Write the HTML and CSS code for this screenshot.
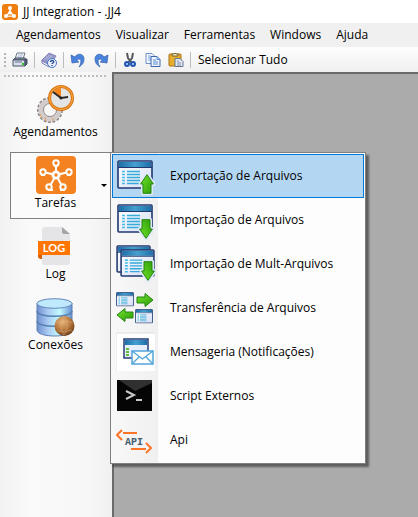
FILE: index.html
```html
<!DOCTYPE html>
<html lang="pt-BR">
<head>
<meta charset="utf-8">
<meta name="viewport" content="width=device-width, initial-scale=1">
<title>JJ Integration - .JJ4</title>
<link rel="stylesheet" href="styles.css">
</head>
<body>
<svg class="defs" aria-hidden="true">
  <defs>
    <linearGradient id="green" x1="0" y1="0" x2="1" y2="1"><stop offset="0" stop-color="#72e329"/><stop offset="1" stop-color="#2a9c08"/></linearGradient>
    <linearGradient id="bar" x1="0" y1="0" x2="1" y2="0"><stop offset="0" stop-color="#1f6fa8"/><stop offset=".5" stop-color="#43a0cf"/><stop offset="1" stop-color="#1f6fa8"/></linearGradient>
    <linearGradient id="pane" x1="0" y1="0" x2="1" y2="1"><stop offset="0" stop-color="#fff"/><stop offset="1" stop-color="#d5def5"/></linearGradient>
    <linearGradient id="disk" x1="0" y1="0" x2="1" y2="0"><stop offset="0" stop-color="#6d8fd0"/><stop offset=".3" stop-color="#a9c8f2"/><stop offset=".65" stop-color="#c2fbff"/><stop offset="1" stop-color="#6590d2"/></linearGradient>
    <radialGradient id="globe" cx=".4" cy=".3" r=".7"><stop offset="0" stop-color="#e6b57a"/><stop offset=".55" stop-color="#bb7c40"/><stop offset="1" stop-color="#70421c"/></radialGradient>
    <symbol id="window" viewBox="0 0 36 29">
      <rect x="1" y="1" width="34" height="27" rx="1" fill="url(#pane)" stroke="#20386f" stroke-width="1.6"/>
      <rect x="2" y="2" width="32" height="5" fill="url(#bar)"/>
      <path d="M1 7.5h34" stroke="#20386f"/>
      <path d="M5 11.500h3M5 14.500h3M5 17.500h3M5 20.500h3M5 23.500h3" stroke="#48bce8" stroke-width="1.600"/>
      <path d="M10 11.500h13M10 14.500h13M10 17.500h13M10 20.500h13M10 23.500h13" stroke="#35abd9" stroke-width="1.400"/>
    </symbol>
    <symbol id="arrow" viewBox="0 0 14 20" overflow="visible">
      <path d="M7 .7l6.400 9.300H11v9.300H3V10H.6z" fill="#dfe9f8" stroke="#dfe9f8" stroke-width="4" stroke-linejoin="round"/>
      <path d="M7 .7l6.400 9.300H11v9.300H3V10H.6z" fill="url(#green)" stroke="#258312" stroke-linejoin="round"/>
    </symbol>
  </defs>
</svg>

<header class="titlebar">
  <svg class="logo" viewBox="0 0 16 16" aria-hidden="true">
    <rect width="16" height="16" rx="3" fill="#f07d10"/>
    <path d="M8 4v5M8 8l-4 4M8 8l4 4M4 12h8" stroke="#fff" stroke-width="1.500"/>
    <circle cx="8" cy="4" r="2" fill="#fff"/><circle cx="4" cy="12" r="2" fill="#fff"/><circle cx="12" cy="12" r="2" fill="#fff"/><circle cx="8" cy="9" r="2" fill="#fff"/>
    <path d="M6 11h4" stroke="#f07d10"/>
  </svg>
  <h1>JJ Integration - .JJ4</h1>
</header>

<nav class="menubar">
  <button>Agendamentos</button>
  <button>Visualizar</button>
  <button>Ferramentas</button>
  <button>Windows</button>
  <button>Ajuda</button>
</nav>

<div class="toolbar" role="toolbar">
  <span class="grip"></span>
  <button aria-label="Imprimir"><svg viewBox="0 0 16 16">
    <path d="M5 1h8l-2 6H3z" fill="#fafcff" stroke="#6d7686"/><path d="M6 3h5M5 5h5" stroke="#9ab3d2"/>
    <path d="M3 6h10l2 2H1z" fill="#8d99ad" stroke="#4b5567"/><path d="M1 8h12v6H1z" fill="#d9dfea" stroke="#465166"/>
    <path d="M13 8l2-1v5l-2 2z" fill="#54627c" stroke="#3f4b62"/><path d="M3 10h7" stroke="#68758b"/><path d="M10 12h2" stroke="#2cc423" stroke-width="2"/>
  </svg></button>
  <span class="separator"></span>
  <button aria-label="Ajuda"><svg viewBox="0 0 16 16">
    <path d="M1 8l7-7 7 3-6 9z" fill="#9799c9" stroke="#8587bb"/><path d="M1 8v3l7 4 1-2-8-4z" fill="#eef0fc" stroke="#7d7fb5"/><path d="M4 7l5-4M6 8l5-4" stroke="#b9bbe2"/>
    <circle cx="11" cy="11" r="4.500" fill="#e9f0fc" stroke="#4574bc"/><path d="M9.500 10c0-2 3.500-2 3.200 0-.2 1-1.700 1-1.700 2M11 13v1" fill="none" stroke="#24488f" stroke-width="1.300"/>
  </svg></button>
  <span class="separator"></span>
  <button aria-label="Desfazer"><svg viewBox="0 0 16 16">
    <path d="M5 5c2-4 9-4 9 2 0 4-2 6-5 8 2-3 3-8 0-8-1 0-2 1-2 2l2 1-7 1-1-8z" fill="#4a83dc" stroke="#315fae" stroke-width=".7"/>
  </svg></button>
  <button aria-label="Refazer"><svg viewBox="0 0 16 16">
    <path d="M11 5C9 1 2 1 2 7c0 4 2 6 5 8-2-3-3-8 0-8 1 0 2 1 2 2l-2 1 7 1 1-8z" fill="#4a83dc" stroke="#315fae" stroke-width=".7"/>
  </svg></button>
  <span class="separator"></span>
  <button aria-label="Recortar"><svg viewBox="0 0 16 16">
    <path d="M5 1l1 5 4 5M11 1l-1 5-4 5" fill="none" stroke="#54585f" stroke-width="2"/>
    <circle cx="5" cy="12" r="2" fill="#b9cff6" stroke="#2458b1" stroke-width="2"/><circle cx="11" cy="12" r="2" fill="#b9cff6" stroke="#2458b1" stroke-width="2"/>
  </svg></button>
  <button aria-label="Copiar"><svg viewBox="0 0 16 16">
    <path d="M1 1.500h6l3 3v7H1z" fill="#f5f9ff" stroke="#6f91c7"/><path d="M3 4h3M3 6h5M3 8h5" stroke="#77a2df"/>
    <path d="M6 4.500h6l3 3v7H6z" fill="#edf4ff" stroke="#3e66ac"/><path d="M12 4.500v3h3M8 8h3M8 10h5M8 12h5" fill="none" stroke="#5b8bd0"/>
  </svg></button>
  <button aria-label="Colar"><svg viewBox="0 0 16 16">
    <rect x="1" y="2" width="12" height="12" rx="1" fill="#e8ae2d" stroke="#a86f14"/><path d="M4 4V2h2l1-1 1 1h2v2z" fill="#faf2cf" stroke="#77632b"/>
    <path d="M7 6.500h5l3 3v5H7z" fill="#e3e9f3" stroke="#66758f"/><path d="M9 9h2M9 11h4M9 13h4" stroke="#7c90b1"/>
  </svg></button>
  <span class="separator"></span>
  <button class="text-button">Selecionar Tudo</button>
</div>

<main class="workspace">
  <aside class="sidebar">
    <span class="side-grip"></span>
    <button class="task">
      <svg viewBox="0 0 40 40" aria-hidden="true">
        <circle cx="14" cy="26" r="10" fill="none" stroke="#8e8888" stroke-width="6" stroke-dasharray="2.500 1.200"/>
        <circle cx="14" cy="26" r="9" fill="none" stroke="#d2cccc" stroke-width="5"/><circle cx="14" cy="26" r="6.500" fill="#f7f7f7" stroke="#918989"/>
        <path d="M4 30l2 4M9 33l1 4M17 34v3" stroke="#e1a05d"/>
        <circle cx="25" cy="14" r="11.500" fill="#e2e5e3" stroke="#d97412" stroke-width="3"/><circle cx="25" cy="14" r="11.500" fill="none" stroke="#ffad45"/>
        <path d="M25 14V4q-5 0-7 4z" fill="#f58318"/><path d="M17 8l8 6 7-1" fill="none" stroke="#2b2929" stroke-width="2"/><circle cx="25" cy="14" r="1.500" fill="#222"/>
      </svg>
      <span>Agendamentos</span>
    </button>
    <button class="task selected" aria-haspopup="menu" aria-expanded="true">
      <svg viewBox="0 0 40 40" aria-hidden="true">
        <rect width="40" height="38" y="1" rx="4" fill="#f58220"/>
        <path d="M20 20V9M20 20L7 17M20 20l13-3M20 20l-6 11M20 20l6 11" stroke="#fff" stroke-width="2"/>
        <g fill="#f58220" stroke="#fff" stroke-width="2"><circle cx="20" cy="8" r="2.700"/><circle cx="7" cy="17" r="2.700"/><circle cx="33" cy="17" r="2.700"/><circle cx="13" cy="32" r="2.700"/><circle cx="27" cy="32" r="2.700"/></g>
        <circle cx="20" cy="20" r="4.500" fill="#fff"/><circle cx="20" cy="20" r="1.700" fill="#f58220"/>
        <path d="M18 11h4M5 20h4M31 20h4M12 35h5M24 35h5" stroke="#fff" stroke-width="2"/>
      </svg>
      <span>Tarefas</span>
      <i class="caret"></i>
    </button>
    <button class="task">
      <svg viewBox="0 0 40 40" aria-hidden="true">
        <path d="M9 1h17l8 7v28q0 3-3 3H9q-3 0-3-3V4q0-3 3-3z" fill="#e5e5e7"/><path d="M26 1l8 7h-6q-2 0-2-2z" fill="#a5a5a7"/>
        <path d="M2 15h32v14H6v4q-4 0-4-3z" fill="#ff7500"/><path d="M2 29h4v4q-4 0-4-4z" fill="#d65f00"/>
        <text x="18" y="26" text-anchor="middle" class="log-text">LOG</text>
      </svg>
      <span>Log</span>
    </button>
    <button class="task">
      <svg viewBox="0 0 40 40" aria-hidden="true">
        <path d="M1 6v27c0 8 35 8 35 0V6z" fill="url(#disk)" stroke="#647fb1"/>
        <path d="M1 14c0 7 35 7 35 0M1 24c0 7 35 7 35 0" fill="none" stroke="#5580b1" stroke-width="1.500"/>
        <ellipse cx="18.500" cy="6.500" rx="17.500" ry="4.800" fill="#bfe9fc" stroke="#6687bb"/>
        <circle cx="28.500" cy="29" r="10" fill="url(#globe)"/><path d="M20 26q7-4 17 0M21 34q8 2 15-1M28 19q-7 9 0 19M28 19q7 9 0 19" fill="none" stroke="#e3b47c" stroke-opacity=".45"/>
      </svg>
      <span>Conexões</span>
    </button>

    <div class="popup" role="menu">
      <button class="active" role="menuitem">
        <svg viewBox="0 0 40 40"><use href="#window" x="1" y="4" width="36" height="29"/><use href="#arrow" x="24" y="18" width="14" height="20"/></svg>
        <span>Exportação de Arquivos</span>
      </button>
      <button role="menuitem">
        <svg viewBox="0 0 40 40"><use href="#window" x="1" y="4" width="36" height="29"/><use href="#arrow" width="14" height="20" transform="translate(23 39) scale(1 -1)"/></svg>
        <span>Importação de Arquivos</span>
      </button>
      <button role="menuitem">
        <svg viewBox="0 0 40 40"><use href="#window" x="0" y="1" width="35" height="28"/><use href="#window" x="4" y="5" width="35" height="28"/><use href="#arrow" width="14" height="20" transform="translate(25 37) scale(1 -1)"/></svg>
        <span>Importação de Mult-Arquivos</span>
      </button>
      <button role="menuitem">
        <svg viewBox="0 0 40 40"><use href="#window" x="0" y="4" width="18" height="14.500"/><use href="#window" x="19" y="21" width="18" height="14.500"/>
          <g fill="url(#green)" stroke="#258312"><path d="M21 9h8V5.500l8 6.500-8 6.500V15h-8z"/><path d="M17 24H9v-3.500L1 27l8 6.500V30h8z"/></g></svg>
        <span>Transferência de Arquivos</span>
      </button>
      <button role="menuitem">
        <svg viewBox="0 0 40 40"><path d="M0 1h39v38H0z" fill="#fff"/><path d="M0 39V1h39" fill="none" stroke="#dedede"/>
          <path d="M8 7h24v19H8z" fill="#e8effc" stroke="#263c76" stroke-width="1.500"/><path d="M9 8h22v5H9z" fill="url(#bar)"/>
          <path d="M10 17h3M10 20h3M10 23h3" stroke="#62bd32" stroke-width="2"/>
          <path d="M16 19h21v13H16z" fill="#fff" stroke="#4fa4dc" stroke-width="1.500"/><path d="M16 19l10.500 8L37 19M16 32l7-7M37 32l-7-7" fill="none" stroke="#4fa4dc" stroke-width="1.300"/></svg>
        <span>Mensageria (Notificações)</span>
      </button>
      <button role="menuitem">
        <svg viewBox="0 0 40 40"><path d="M1 4h35v31H1z" fill="#050505"/><path d="M3 4h33v3L19 15z" fill="#303030"/><path d="M10 15l8 4-8 4M20 24h6" fill="none" stroke="#c8c8c8" stroke-width="2"/></svg>
        <span>Script Externos</span>
      </button>
      <button role="menuitem">
        <svg viewBox="0 0 40 40"><path d="M21 13H7M6 10l-5 5 5 5M15 29h15M30 23l5 5-5 5" fill="none" stroke="#ff7427" stroke-width="2"/><text x="18" y="25" text-anchor="middle" class="api-text">API</text></svg>
        <span>Api</span>
      </button>
    </div>
  </aside>
  <section class="canvas" aria-label="Área de trabalho"></section>
</main>
</body>
</html>
```

FILE: styles.css
```css
* { box-sizing: border-box; }
body {
  margin: 0;
  min-height: 100vh;
  display: flex;
  flex-direction: column;
  background: #fff;
  color: #000;
  font: 12px/16px "Segoe UI", "Open Sans", sans-serif;
}
button {
  margin: 0;
  padding: 0;
  border: 0;
  background: none;
  color: inherit;
  font: inherit;
  white-space: nowrap;
}
svg { display: block; flex: none; }
.defs { position: absolute; width: 0; height: 0; }

.titlebar { display: flex; align-items: center; gap: 5px; height: 23px; padding-left: 2px; }
.titlebar h1 { margin: 0; font-size: 12px; font-weight: 400; }
.logo { width: 16px; height: 16px; }

.menubar { display: flex; align-items: center; gap: 15px; height: 24px; padding-left: 16px; background: #f0f0f0; }

.toolbar {
  display: flex;
  align-items: center;
  height: 25px;
  padding-left: 4px;
  background: linear-gradient(#fdfdfd, #f0f0f0);
}
.toolbar svg { width: 16px; height: 16px; }
.toolbar button { padding: 0 4px 0 3px; }
.grip { width: 2px; height: 14px; margin-right: 3px; background: repeating-linear-gradient(#b5b5b5 0 2px, transparent 2px 4px); }
.separator { width: 1px; height: 16px; margin: 0 3px 0 2px; background: #bdbdbd; }
.toolbar .text-button { padding: 0 4px; }

.workspace { flex: 1; display: flex; }
.sidebar {
  position: relative;
  display: flex;
  flex-direction: column;
  gap: 4px;
  width: 112px;
  padding: 3px 1px 0 10px;
  background: linear-gradient(90deg, #f2f2f2, #fafafa 30px, #f7f7f7 90px, #f0f0f0);
}
.side-grip { height: 2px; margin: 0 4px 0 -6px; background: repeating-linear-gradient(90deg, #bdbdbd 0 2px, transparent 2px 4px); }
.task {
  position: relative;
  display: flex;
  flex-direction: column;
  align-items: center;
  height: 67px;
  padding: 2px 10px 0 0;
  border: 1px solid transparent;
}
.task svg { width: 40px; height: 40px; }
.task.selected { border-color: #808080; background: #fbfbfb; }
.caret { position: absolute; right: 3px; top: 31px; border: 3px solid transparent; border-top-color: #000; border-bottom: 0; }
.log-text { font: 700 11px "Lato", sans-serif; fill: #fff; }
.api-text { font: 700 10px "Liberation Mono", monospace; fill: #435d70; }

.canvas { flex: 1; border: solid #696969; border-width: 2px 0 0 2px; background: #ababab; }

.popup {
  position: absolute;
  left: 110px;
  top: 80px;
  width: 256px;
  padding: 1px;
  border: 1px solid #808080;
  background: linear-gradient(90deg, #f8f8f8, #f0f0f0 47px, #fdfdfd 47px);
  box-shadow: 3px 3px 2px rgb(0 0 0 / 45%);
}
.popup button {
  display: flex;
  align-items: center;
  gap: 14px;
  width: 100%;
  height: 44px;
  padding-left: 3px;
  border: 1px solid transparent;
  text-align: left;
}
.popup svg { width: 40px; height: 40px; }
.popup .active { border-color: #0078d7; background: #b3d7f3; }
```
